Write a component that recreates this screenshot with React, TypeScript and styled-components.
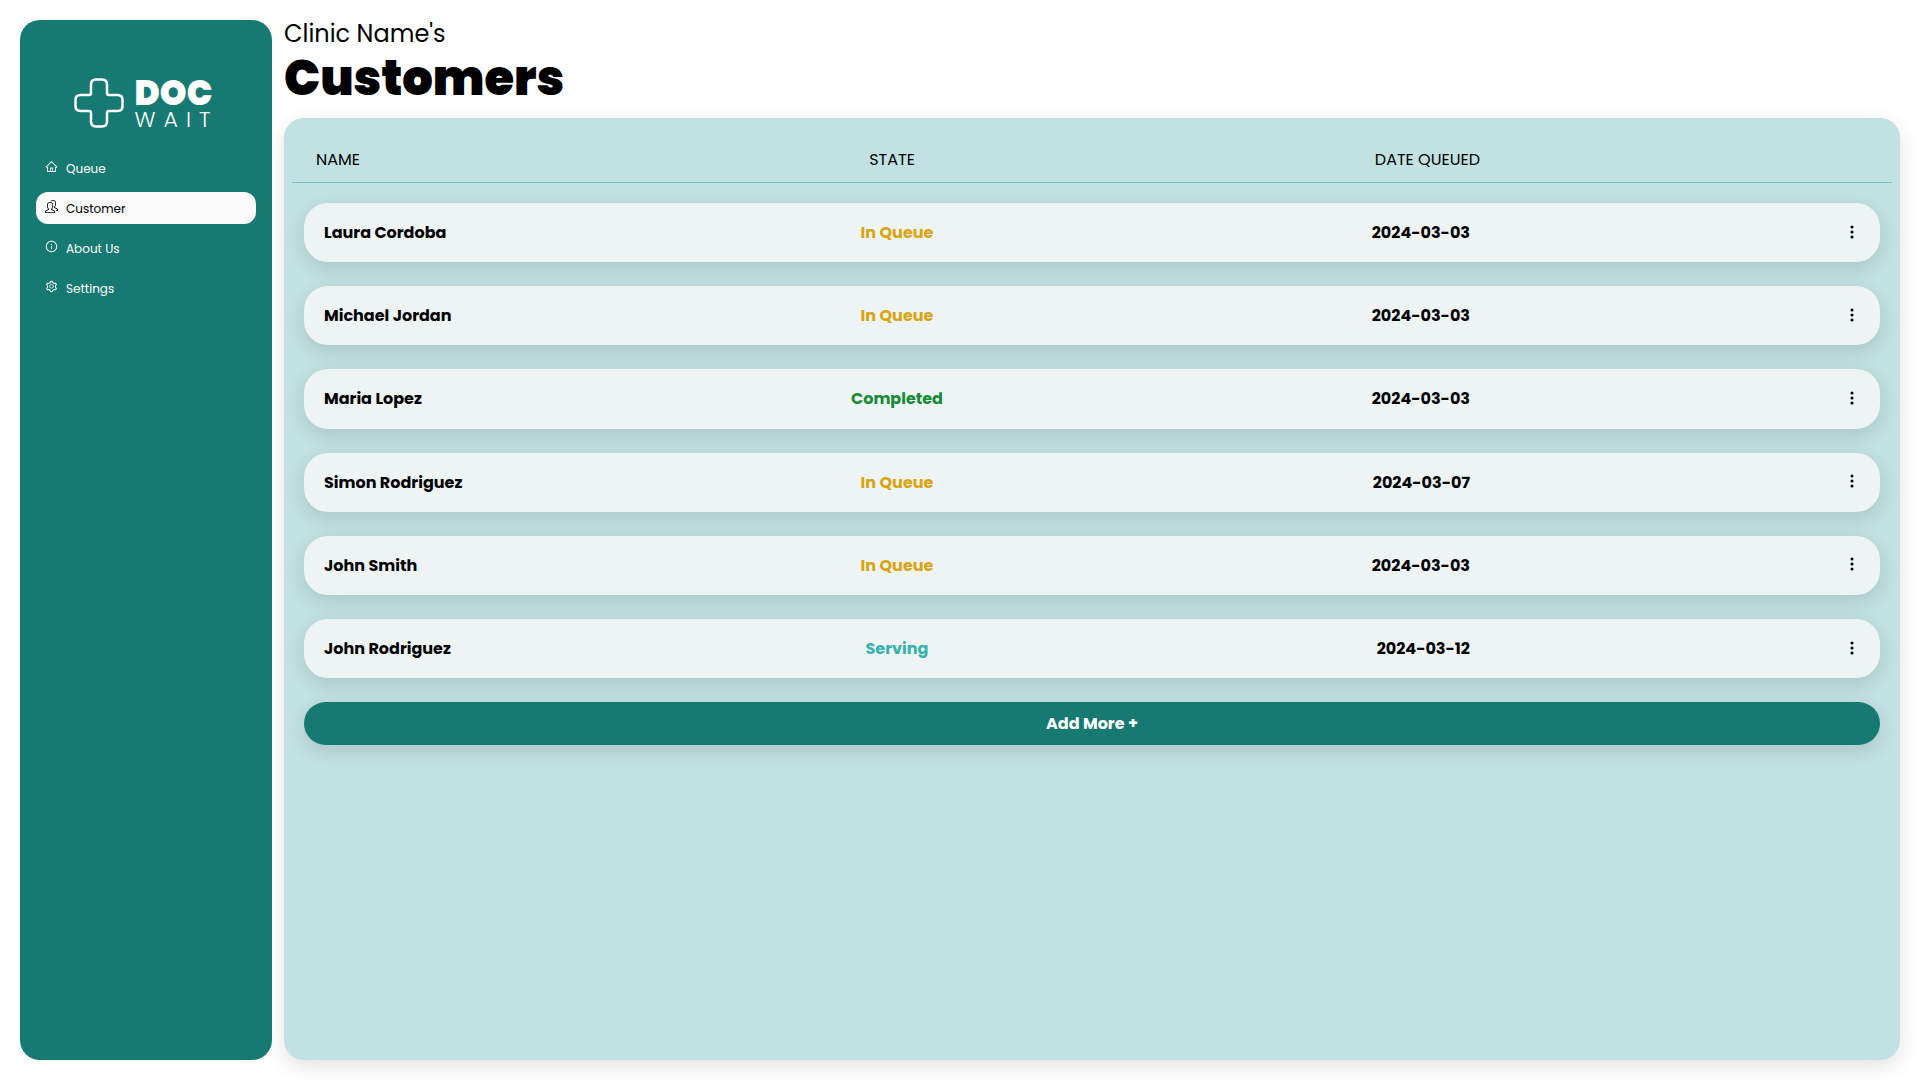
import React from "react";
import styled, { createGlobalStyle } from "styled-components";
import { AiOutlineHome, AiOutlineInfoCircle, AiOutlineSetting } from "react-icons/ai";
import { SlPeople } from "react-icons/sl";
import { BsThreeDotsVertical } from "react-icons/bs";

const teal = "#177a72";
const shadow = "0 6px 20px rgba(0, 0, 0, 0.12)";

const GlobalStyle = createGlobalStyle`
  *, *::before, *::after { box-sizing: border-box; }
  body {
    margin: 0;
    background: #fff;
    color: #000;
    font-family: Poppins, Inter, "Noto Sans", sans-serif;
    font-size: 16px;
    line-height: 1.2;
  }
`;

const Page = styled.div`
  display: flex;
  gap: 12px;
  min-height: 100vh;
  padding: 20px;
`;

const Sidebar = styled.aside`
  flex: 0 0 252px;
  display: flex;
  flex-direction: column;
  gap: 24px;
  padding: 56px 16px 16px;
  border-radius: 20px;
  background: ${teal};
  color: #fff;
`;

const Logo = styled.div`
  display: flex;
  justify-content: center;
  gap: 11px;
  height: 52px;
`;

const LogoMark = styled.svg`
  width: 50px;
  height: 50px;
  margin-top: 2px;
`;

const Wordmark = styled.div`
  display: flex;
  flex-direction: column;
  gap: 2px;
  padding-top: 2px;
  white-space: nowrap;
`;

const LogoStrong = styled.span`
  font-size: 34px;
  line-height: 30px;
  font-weight: 900;
`;

const LogoLight = styled.span`
  font-size: 22px;
  line-height: 20px;
  font-weight: 300;
  letter-spacing: 8px;
`;

const Nav = styled.nav`
  display: flex;
  flex-direction: column;
  gap: 8px;
`;

const NavLink = styled.a<{ $active?: boolean }>`
  display: flex;
  align-items: center;
  gap: 8px;
  height: 32px;
  padding: 2px 9px 0;
  border-radius: 12px;
  background: ${(p) => (p.$active ? "#fafafa" : "transparent")};
  color: ${(p) => (p.$active ? "#000" : "#fff")};
  font-size: 12px;
  text-decoration: none;

  svg {
    width: 13px;
    height: 13px;
    margin-bottom: 6px;
  }
`;

const Main = styled.main`
  flex: 1;
  min-width: 0;
  display: flex;
  flex-direction: column;
`;

const Clinic = styled.p`
  margin: 0;
  font-size: 24px;
  line-height: 28px;
`;

const Title = styled.h1`
  margin: 0 0 8px;
  font-size: 48px;
  line-height: 62px;
  font-weight: 900;
`;

const Panel = styled.section`
  flex: 1;
  padding: 20px 8px;
  border-radius: 20px;
  background: #c2e1e2;
  box-shadow: ${shadow};
`;

const Table = styled.table`
  display: block;
`;

const Head = styled.thead`
  display: block;
  border-bottom: 1px solid #74c0c5;
`;

const HeadRow = styled.tr`
  display: grid;
  grid-template-columns: repeat(3, 1fr) 388px;
  align-items: center;
  height: 44px;
  padding: 0 24px 1px;
`;

const HeadCell = styled.th<{ $align?: string }>`
  padding: 0;
  font-weight: 400;
  text-align: ${(p) => p.$align || "left"};
`;

const StateHeadCell = styled(HeadCell)`
  padding-right: 12px;
`;

const Body = styled.tbody`
  display: flex;
  flex-direction: column;
  gap: 24px;
  padding: 20px 12px 24px;
`;

const Row = styled.tr`
  display: grid;
  grid-template-columns: repeat(3, 1fr) 390px;
  align-items: center;
  padding: 20px;
  border-radius: 24px;
  background: #eef4f4;
  box-shadow: ${shadow};
`;

const stateColors = {
  "In Queue": "#d9a40f",
  Completed: "#168a36",
  Serving: "#38b2ac",
};

type State = keyof typeof stateColors;

const Cell = styled.td<{ $align?: string; $state?: State }>`
  padding: 0;
  font-weight: 700;
  text-align: ${(p) => p.$align || "left"};
  color: ${(p) => (p.$state ? stateColors[p.$state] : "#000")};
`;

const MenuButton = styled.button`
  display: block;
  margin-left: auto;
  padding: 0 0 2px;
  border: 0;
  background: none;
  color: #000;
  cursor: pointer;

  svg {
    display: block;
    width: 16px;
    height: 16px;
  }
`;

const AddArea = styled.div`
  display: flex;
  padding: 0 12px;
`;

const AddButton = styled.button`
  flex: 1;
  padding: 12px;
  border: 0;
  border-radius: 24px;
  background: ${teal};
  box-shadow: ${shadow};
  color: #fff;
  font: inherit;
  font-weight: 700;
  cursor: pointer;
`;

const links = [
  { label: "Queue", Icon: AiOutlineHome },
  { label: "Customer", Icon: SlPeople, active: true },
  { label: "About Us", Icon: AiOutlineInfoCircle },
  { label: "Settings", Icon: AiOutlineSetting },
];

const customers: { name: string; state: State; date: string }[] = [
  { name: "Laura Cordoba", state: "In Queue", date: "2024-03-03" },
  { name: "Michael Jordan", state: "In Queue", date: "2024-03-03" },
  { name: "Maria Lopez", state: "Completed", date: "2024-03-03" },
  { name: "Simon Rodriguez", state: "In Queue", date: "2024-03-07" },
  { name: "John Smith", state: "In Queue", date: "2024-03-03" },
  { name: "John Rodriguez", state: "Serving", date: "2024-03-12" },
];

export default function App() {
  return (
    <>
      <GlobalStyle />
      <Page>
        <Sidebar>
          <Logo>
            <LogoMark viewBox="0 0 50 50" fill="none" stroke="#fff" strokeWidth="2.5" aria-hidden="true">
              <path d="M22 1.5h6q5 0 5 5V15q0 2 2 2h8.500q5 0 5 5v6q0 5-5 5H35q-2 0-2 2v8.500q0 5-5 5h-6q-5 0-5-5V35q0-2-2-2H6.500q-5 0-5-5v-6q0-5 5-5H15q2 0 2-2V6.500q0-5 5-5z" />
            </LogoMark>
            <Wordmark>
              <LogoStrong>DOC</LogoStrong>
              <LogoLight>WAIT</LogoLight>
            </Wordmark>
          </Logo>
          <Nav>
            {links.map(({ label, Icon, active }) => (
              <NavLink key={label} href="#" $active={active} aria-current={active ? "page" : undefined}>
                <Icon aria-hidden="true" />
                {label}
              </NavLink>
            ))}
          </Nav>
        </Sidebar>
        <Main>
          <Clinic>Clinic Name's</Clinic>
          <Title>Customers</Title>
          <Panel>
            <Table>
              <Head>
                <HeadRow>
                  <HeadCell scope="col">NAME</HeadCell>
                  <StateHeadCell scope="col" $align="center">STATE</StateHeadCell>
                  <HeadCell scope="col" $align="right">DATE QUEUED</HeadCell>
                </HeadRow>
              </Head>
              <Body>
                {customers.map((c) => (
                  <Row key={c.name}>
                    <Cell>{c.name}</Cell>
                    <Cell $align="center" $state={c.state}>{c.state}</Cell>
                    <Cell $align="right">{c.date}</Cell>
                    <Cell>
                      <MenuButton type="button" aria-label={`Options for ${c.name}`}>
                        <BsThreeDotsVertical />
                      </MenuButton>
                    </Cell>
                  </Row>
                ))}
              </Body>
            </Table>
            <AddArea>
              <AddButton type="button">Add More +</AddButton>
            </AddArea>
          </Panel>
        </Main>
      </Page>
    </>
  );
}
